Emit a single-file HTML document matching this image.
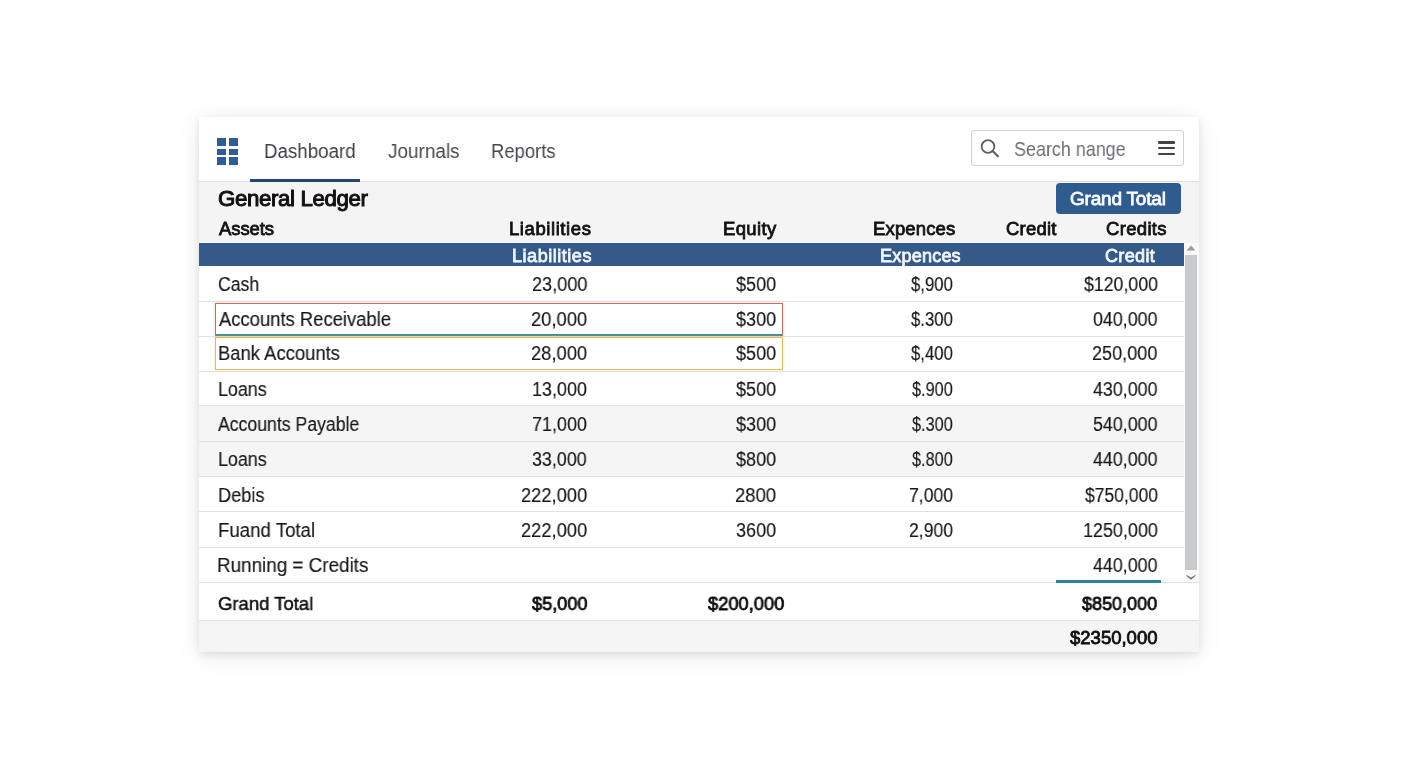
<!DOCTYPE html>
<html><head><meta charset="utf-8"><title>General Ledger</title>
<style>
*{margin:0;padding:0;box-sizing:border-box}
html,body{width:1408px;height:768px;overflow:hidden;background:#fff}
body{position:relative;font-family:"Liberation Sans", sans-serif;color:#1a1a1a}
.t{position:absolute;white-space:nowrap;transform-origin:0 0;will-change:transform}
.r{position:absolute}
.card{position:absolute;left:199px;top:117px;width:1000px;height:535px;background:#fff;
 box-shadow:0 3px 7px rgba(0,0,0,0.08),0 0 16px rgba(0,0,0,0.05),0 8px 30px rgba(0,0,0,0.05)}
</style></head><body>
<div class="card"></div>
<div class="r" style="left:199px;top:181px;width:1000px;height:1px;background:#dcdee1"></div>
<div class="r" style="left:217px;top:138px;width:8.8px;height:7.6px;background:#2f5e96"></div>
<div class="r" style="left:217px;top:148.5px;width:8.8px;height:6px;background:#2f5e96"></div>
<div class="r" style="left:217px;top:157px;width:8.8px;height:7.6px;background:#2f5e96"></div>
<div class="r" style="left:229px;top:138px;width:8.8px;height:7.6px;background:#2f5e96"></div>
<div class="r" style="left:229px;top:148.5px;width:8.8px;height:6px;background:#2f5e96"></div>
<div class="r" style="left:229px;top:157px;width:8.8px;height:7.6px;background:#2f5e96"></div>
<div class="r" style="left:970.5px;top:130px;width:213px;height:36.3px;border:1px solid #cfd1d4;border-radius:3px;background:#fff"></div>
<svg class="r" style="left:978px;top:138px" width="24" height="22" viewBox="0 0 24 22"><circle cx="10.0" cy="8.5" r="6.35" fill="none" stroke="#5e5f63" stroke-width="1.8"/><line x1="14.6" y1="13.1" x2="19.9" y2="18.3" stroke="#5e5f63" stroke-width="2.1" stroke-linecap="round"/></svg>
<div class="r" style="left:1158.2px;top:141.0px;width:17.2px;height:2.6px;background:#424448;border-radius:1px"></div>
<div class="r" style="left:1158.2px;top:146.9px;width:17.2px;height:2.6px;background:#424448;border-radius:1px"></div>
<div class="r" style="left:1158.2px;top:152.9px;width:17.2px;height:2.6px;background:#424448;border-radius:1px"></div>
<div class="r" style="left:199px;top:182px;width:1000px;height:61px;background:#f4f4f5"></div>
<div class="r" style="left:249.7px;top:178.8px;width:110.3px;height:2.8px;background:#254670"></div>
<div class="r" style="left:199px;top:241.5px;width:985px;height:1.5px;background:#fafbfc"></div>
<div class="r" style="left:1055.8px;top:183.1px;width:125.2px;height:31.1px;background:#2f5b8f;border-radius:4px"></div>
<div class="r" style="left:199px;top:243px;width:984.5px;height:23px;background:#335a88"></div>
<div class="r" style="left:199px;top:266px;width:985px;height:316.5px;background:#fff"></div>
<div class="r" style="left:199px;top:406px;width:985px;height:70.5px;background:#f5f5f6"></div>
<div class="r" style="left:199px;top:301px;width:985px;height:1px;background:#e1e2e4"></div>
<div class="r" style="left:199px;top:336px;width:985px;height:1px;background:#e1e2e4"></div>
<div class="r" style="left:199px;top:370.5px;width:985px;height:1px;background:#e1e2e4"></div>
<div class="r" style="left:199px;top:405px;width:985px;height:1px;background:#e1e2e4"></div>
<div class="r" style="left:199px;top:441px;width:985px;height:1px;background:#e1e2e4"></div>
<div class="r" style="left:199px;top:476px;width:985px;height:1px;background:#e1e2e4"></div>
<div class="r" style="left:199px;top:511px;width:985px;height:1px;background:#e1e2e4"></div>
<div class="r" style="left:199px;top:546.5px;width:985px;height:1px;background:#e1e2e4"></div>
<div class="r" style="left:1184px;top:243px;width:15px;height:340px;background:#f9f9fa"></div>
<div class="r" style="left:1185px;top:255px;width:12px;height:314.6px;background:#c9cacd"></div>
<svg class="r" style="left:1185px;top:244px" width="12" height="8"><polygon points="1.5,6.5 6,1.5 10.5,6.5" fill="#9c9da1"/></svg>
<svg class="r" style="left:1185px;top:573px" width="12" height="8"><polygon points="1.2,1.8 6,4.4 10.8,1.8 10.2,3.3 6,6.7 1.8,3.3" fill="#6f7175"/></svg>
<div class="r" style="left:214.5px;top:302.8px;width:568.8px;height:32.9px;border:1.8px solid #c96c5e;border-bottom:2px solid #3f8d94;box-shadow:0 0 3px rgba(240,140,120,0.45)"></div>
<div class="r" style="left:214.5px;top:336.6px;width:568.4px;height:33.7px;border:1.8px solid #dfbc5e;box-shadow:0 0 3px rgba(245,210,110,0.6)"></div>
<div class="r" style="left:199px;top:582.5px;width:1000px;height:38px;background:#fff"></div>
<div class="r" style="left:199px;top:582px;width:1000px;height:1px;background:#e1e2e4"></div>
<div class="r" style="left:199px;top:620px;width:1000px;height:1px;background:#e1e2e4"></div>
<div class="r" style="left:199px;top:621px;width:1000px;height:31px;background:#f5f5f6"></div>
<div class="r" style="left:1056px;top:580.4px;width:105px;height:2.2px;background:#2e8399"></div>
<div class="t" style="top:140px;font-size:20px;line-height:22px;color:#3d3e42;left:263.66px;transform:scaleX(0.9365);">Dashboard</div>
<div class="t" style="top:140px;font-size:20px;line-height:22px;color:#47484c;left:388.20px;transform:scaleX(0.9467);">Journals</div>
<div class="t" style="top:140px;font-size:20px;line-height:22px;color:#47484c;left:491.48px;transform:scaleX(0.9217);">Reports</div>
<div class="t" style="top:137px;font-size:20.6px;line-height:23px;color:#6c6e72;left:1014.23px;transform:scaleX(0.8709);">Search nange</div>
<div class="t" style="top:186px;font-size:22.3px;line-height:25px;color:#111;-webkit-text-stroke:1.0px #111;left:218.00px;letter-spacing:-0.385px;transform:scaleX(1.0);">General Ledger</div>
<div class="t" style="top:188px;font-size:19.0px;line-height:21px;color:#fbfcfd;-webkit-text-stroke:0.8px #fbfcfd;left:1070.30px;letter-spacing:-0.200px;transform:scaleX(1.0);">Grand Total</div>
<div class="t" style="top:218px;font-size:18.5px;line-height:21px;color:#111;-webkit-text-stroke:0.8px #111;left:218.80px;letter-spacing:-0.080px;transform:scaleX(1.0);">Assets</div>
<div class="t" style="top:218px;font-size:18.5px;line-height:21px;color:#111;-webkit-text-stroke:0.8px #111;left:509.00px;letter-spacing:0.580px;transform:scaleX(1.0);">Liabilities</div>
<div class="t" style="top:218px;font-size:18.5px;line-height:21px;color:#111;-webkit-text-stroke:0.8px #111;left:722.80px;letter-spacing:0.360px;transform:scaleX(1.0);">Equity</div>
<div class="t" style="top:218px;font-size:18.5px;line-height:21px;color:#111;-webkit-text-stroke:0.8px #111;left:872.70px;letter-spacing:0.143px;transform:scaleX(1.0);">Expences</div>
<div class="t" style="top:218px;font-size:18.5px;line-height:21px;color:#111;-webkit-text-stroke:0.8px #111;left:1006.20px;letter-spacing:0.200px;transform:scaleX(1.0);">Credit</div>
<div class="t" style="top:218px;font-size:18.5px;line-height:21px;color:#111;-webkit-text-stroke:0.8px #111;left:1106.00px;letter-spacing:0.333px;transform:scaleX(1.0);">Credits</div>
<div class="t" style="top:246px;font-size:18.1px;line-height:20px;color:#f2f5f9;-webkit-text-stroke:0.8px #f2f5f9;left:512.40px;letter-spacing:0.500px;transform:scaleX(1.0);">Liabilities</div>
<div class="t" style="top:246px;font-size:18.1px;line-height:20px;color:#f2f5f9;-webkit-text-stroke:0.8px #f2f5f9;left:879.90px;letter-spacing:0.171px;transform:scaleX(1.0);">Expences</div>
<div class="t" style="top:246px;font-size:18.1px;line-height:20px;color:#f2f5f9;-webkit-text-stroke:0.8px #f2f5f9;left:1104.70px;letter-spacing:0.300px;transform:scaleX(1.0);">Credit</div>
<div class="t" style="top:273px;font-size:20px;line-height:22px;color:#18181a;-webkit-text-stroke:0.15px #18181a;left:217.62px;transform:scaleX(0.8822);">Cash</div>
<div class="t" style="top:273px;font-size:20px;line-height:22px;color:#18181a;-webkit-text-stroke:0.15px #18181a;left:531.59px;transform:scaleX(0.9067);">23,000</div>
<div class="t" style="top:273px;font-size:20px;line-height:22px;color:#18181a;-webkit-text-stroke:0.15px #18181a;left:735.70px;transform:scaleX(0.9045);">$500</div>
<div class="t" style="top:273px;font-size:20px;line-height:22px;color:#18181a;-webkit-text-stroke:0.15px #18181a;left:910.90px;transform:scaleX(0.8360);">$,900</div>
<div class="t" style="top:273px;font-size:20px;line-height:22px;color:#18181a;-webkit-text-stroke:0.15px #18181a;left:1083.80px;transform:scaleX(0.8867);">$120,000</div>
<div class="t" style="top:308px;font-size:20px;line-height:22px;color:#18181a;-webkit-text-stroke:0.15px #18181a;left:218.50px;transform:scaleX(0.9210);">Accounts Receivable</div>
<div class="t" style="top:308px;font-size:20px;line-height:22px;color:#18181a;-webkit-text-stroke:0.15px #18181a;left:530.88px;transform:scaleX(0.9183);">20,000</div>
<div class="t" style="top:308px;font-size:20px;line-height:22px;color:#18181a;-webkit-text-stroke:0.15px #18181a;left:735.70px;transform:scaleX(0.9045);">$300</div>
<div class="t" style="top:308px;font-size:20px;line-height:22px;color:#18181a;-webkit-text-stroke:0.15px #18181a;left:910.90px;transform:scaleX(0.8360);">$.300</div>
<div class="t" style="top:308px;font-size:20px;line-height:22px;color:#18181a;-webkit-text-stroke:0.15px #18181a;left:1093.20px;transform:scaleX(0.8917);">040,000</div>
<div class="t" style="top:342px;font-size:20px;line-height:22px;color:#18181a;-webkit-text-stroke:0.15px #18181a;left:218.38px;transform:scaleX(0.9214);">Bank Accounts</div>
<div class="t" style="top:342px;font-size:20px;line-height:22px;color:#18181a;-webkit-text-stroke:0.15px #18181a;left:530.88px;transform:scaleX(0.9183);">28,000</div>
<div class="t" style="top:342px;font-size:20px;line-height:22px;color:#18181a;-webkit-text-stroke:0.15px #18181a;left:735.70px;transform:scaleX(0.9045);">$500</div>
<div class="t" style="top:342px;font-size:20px;line-height:22px;color:#18181a;-webkit-text-stroke:0.15px #18181a;left:910.90px;transform:scaleX(0.8360);">$,400</div>
<div class="t" style="top:342px;font-size:20px;line-height:22px;color:#18181a;-webkit-text-stroke:0.15px #18181a;left:1092.30px;transform:scaleX(0.9042);">250,000</div>
<div class="t" style="top:378px;font-size:20px;line-height:22px;color:#18181a;-webkit-text-stroke:0.15px #18181a;left:217.91px;transform:scaleX(0.8943);">Loans</div>
<div class="t" style="top:378px;font-size:20px;line-height:22px;color:#18181a;-webkit-text-stroke:0.15px #18181a;left:532.10px;transform:scaleX(0.8983);">13,000</div>
<div class="t" style="top:378px;font-size:20px;line-height:22px;color:#18181a;-webkit-text-stroke:0.15px #18181a;left:735.70px;transform:scaleX(0.9045);">$500</div>
<div class="t" style="top:378px;font-size:20px;line-height:22px;color:#18181a;-webkit-text-stroke:0.15px #18181a;left:912.00px;transform:scaleX(0.8140);">$.900</div>
<div class="t" style="top:378px;font-size:20px;line-height:22px;color:#18181a;-webkit-text-stroke:0.15px #18181a;left:1093.20px;transform:scaleX(0.8917);">430,000</div>
<div class="t" style="top:413px;font-size:20px;line-height:22px;color:#18181a;-webkit-text-stroke:0.15px #18181a;left:217.90px;transform:scaleX(0.8825);">Accounts Payable</div>
<div class="t" style="top:413px;font-size:20px;line-height:22px;color:#18181a;-webkit-text-stroke:0.15px #18181a;left:532.10px;transform:scaleX(0.8983);">71,000</div>
<div class="t" style="top:413px;font-size:20px;line-height:22px;color:#18181a;-webkit-text-stroke:0.15px #18181a;left:735.70px;transform:scaleX(0.9045);">$300</div>
<div class="t" style="top:413px;font-size:20px;line-height:22px;color:#18181a;-webkit-text-stroke:0.15px #18181a;left:912.00px;transform:scaleX(0.8140);">$.300</div>
<div class="t" style="top:413px;font-size:20px;line-height:22px;color:#18181a;-webkit-text-stroke:0.15px #18181a;left:1093.20px;transform:scaleX(0.8917);">540,000</div>
<div class="t" style="top:448px;font-size:20px;line-height:22px;color:#18181a;-webkit-text-stroke:0.15px #18181a;left:217.91px;transform:scaleX(0.8943);">Loans</div>
<div class="t" style="top:448px;font-size:20px;line-height:22px;color:#18181a;-webkit-text-stroke:0.15px #18181a;left:532.40px;transform:scaleX(0.8934);">33,000</div>
<div class="t" style="top:448px;font-size:20px;line-height:22px;color:#18181a;-webkit-text-stroke:0.15px #18181a;left:735.70px;transform:scaleX(0.9045);">$800</div>
<div class="t" style="top:448px;font-size:20px;line-height:22px;color:#18181a;-webkit-text-stroke:0.15px #18181a;left:912.00px;transform:scaleX(0.8140);">$.800</div>
<div class="t" style="top:448px;font-size:20px;line-height:22px;color:#18181a;-webkit-text-stroke:0.15px #18181a;left:1093.20px;transform:scaleX(0.8917);">440,000</div>
<div class="t" style="top:484px;font-size:20px;line-height:22px;color:#18181a;-webkit-text-stroke:0.15px #18181a;left:217.59px;transform:scaleX(0.9080);">Debis</div>
<div class="t" style="top:484px;font-size:20px;line-height:22px;color:#18181a;-webkit-text-stroke:0.15px #18181a;left:520.98px;transform:scaleX(0.9155);">222,000</div>
<div class="t" style="top:484px;font-size:20px;line-height:22px;color:#18181a;-webkit-text-stroke:0.15px #18181a;left:734.77px;transform:scaleX(0.9256);">2800</div>
<div class="t" style="top:484px;font-size:20px;line-height:22px;color:#18181a;-webkit-text-stroke:0.15px #18181a;left:908.72px;transform:scaleX(0.8796);">7,000</div>
<div class="t" style="top:484px;font-size:20px;line-height:22px;color:#18181a;-webkit-text-stroke:0.15px #18181a;left:1084.80px;transform:scaleX(0.8747);">$750,000</div>
<div class="t" style="top:519px;font-size:20px;line-height:22px;color:#18181a;-webkit-text-stroke:0.15px #18181a;left:217.57px;transform:scaleX(0.9324);">Fuand Total</div>
<div class="t" style="top:519px;font-size:20px;line-height:22px;color:#18181a;-webkit-text-stroke:0.15px #18181a;left:520.98px;transform:scaleX(0.9155);">222,000</div>
<div class="t" style="top:519px;font-size:20px;line-height:22px;color:#18181a;-webkit-text-stroke:0.15px #18181a;left:735.70px;transform:scaleX(0.9045);">3600</div>
<div class="t" style="top:519px;font-size:20px;line-height:22px;color:#18181a;-webkit-text-stroke:0.15px #18181a;left:908.72px;transform:scaleX(0.8796);">2,900</div>
<div class="t" style="top:519px;font-size:20px;line-height:22px;color:#18181a;-webkit-text-stroke:0.15px #18181a;left:1082.90px;transform:scaleX(0.8976);">1250,000</div>
<div class="t" style="top:554px;font-size:20px;line-height:22px;color:#18181a;-webkit-text-stroke:0.15px #18181a;left:217.46px;transform:scaleX(0.9421);">Running = Credits</div>
<div class="t" style="top:554px;font-size:20px;line-height:22px;color:#18181a;-webkit-text-stroke:0.15px #18181a;left:1093.20px;transform:scaleX(0.8917);">440,000</div>
<div class="t" style="top:593px;font-size:19.0px;line-height:21px;color:#111;-webkit-text-stroke:0.55px #111;left:218.40px;transform:scaleX(0.9732);">Grand Total</div>
<div class="t" style="top:593px;font-size:18.8px;line-height:21px;color:#0d0d0d;-webkit-text-stroke:0.8px #0d0d0d;left:532.20px;transform:scaleX(0.9672);">$5,000</div>
<div class="t" style="top:593px;font-size:18.8px;line-height:21px;color:#0d0d0d;-webkit-text-stroke:0.8px #0d0d0d;left:708.10px;transform:scaleX(0.9734);">$200,000</div>
<div class="t" style="top:593px;font-size:18.8px;line-height:21px;color:#0d0d0d;-webkit-text-stroke:0.8px #0d0d0d;left:1082.00px;transform:scaleX(0.9582);">$850,000</div>
<div class="t" style="top:627px;font-size:18.3px;line-height:21px;color:#0d0d0d;-webkit-text-stroke:0.8px #0d0d0d;left:1069.70px;transform:scaleX(1.0126);">$2350,000</div>
</body></html>
